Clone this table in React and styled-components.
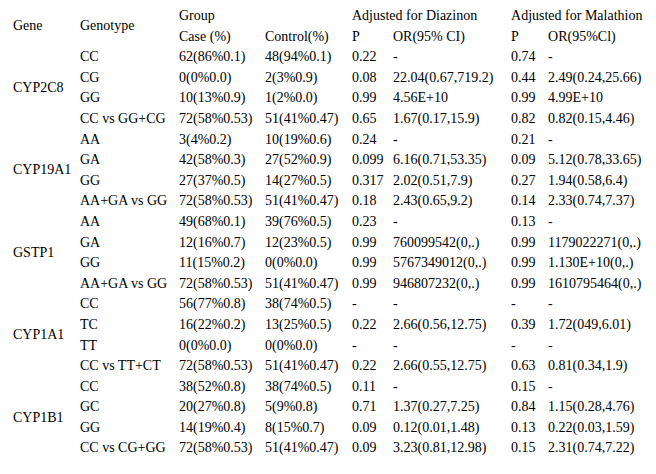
import React from "react";
import styled, { createGlobalStyle } from "styled-components";

const GlobalStyle = createGlobalStyle`
  html, body {
    margin: 0;
    padding: 0;
    background: #ffffff;
  }
  body {
    font-family: "Liberation Serif", "Times New Roman", serif;
    color: #000000;
  }
`;

const Page = styled.div`
  width: 656px;
  height: 474px;
  padding: 6px 0 0 13px;
  box-sizing: border-box;
  overflow: hidden;
`;

const Table = styled.table`
  border-collapse: collapse;
  table-layout: fixed;
  width: 643px;
  font-family: "Liberation Serif", "Times New Roman", serif;
  font-size: 14px;
  color: #000000;
`;

const Row = styled.tr`
  height: 20.6px;
`;

const Cell = styled.td`
  padding: 0;
  text-align: left;
  vertical-align: middle;
  white-space: nowrap;
  line-height: 20.6px;
  font-family: "Liberation Serif", "Times New Roman", serif;
  font-size: 14px;
`;

const widths = [67, 99, 86, 87, 41, 118, 37, 108];

const genes = [
  {
    name: "CYP2C8",
    rows: [
      ["CC", "62(86%0.1)", "48(94%0.1)", "0.22", "-", "0.74", "-"],
      ["CG", "0(0%0.0)", "2(3%0.9)", "0.08", "22.04(0.67,719.2)", "0.44", "2.49(0.24,25.66)"],
      ["GG", "10(13%0.9)", "1(2%0.0)", "0.99", "4.56E+10", "0.99", "4.99E+10"],
      ["CC vs GG+CG", "72(58%0.53)", "51(41%0.47)", "0.65", "1.67(0.17,15.9)", "0.82", "0.82(0.15,4.46)"],
    ],
  },
  {
    name: "CYP19A1",
    rows: [
      ["AA", "3(4%0.2)", "10(19%0.6)", "0.24", "-", "0.21", "-"],
      ["GA", "42(58%0.3)", "27(52%0.9)", "0.099", "6.16(0.71,53.35)", "0.09", "5.12(0.78,33.65)"],
      ["GG", "27(37%0.5)", "14(27%0.5)", "0.317", "2.02(0.51,7.9)", "0.27", "1.94(0.58,6.4)"],
      ["AA+GA vs GG", "72(58%0.53)", "51(41%0.47)", "0.18", "2.43(0.65,9.2)", "0.14", "2.33(0.74,7.37)"],
    ],
  },
  {
    name: "GSTP1",
    rows: [
      ["AA", "49(68%0.1)", "39(76%0.5)", "0.23", "-", "0.13", "-"],
      ["GA", "12(16%0.7)", "12(23%0.5)", "0.99", "760099542(0,.)", "0.99", "1179022271(0,.)"],
      ["GG", "11(15%0.2)", "0(0%0.0)", "0.99", "5767349012(0,.)", "0.99", "1.130E+10(0,.)"],
      ["AA+GA vs GG", "72(58%0.53)", "51(41%0.47)", "0.99", "946807232(0,.)", "0.99", "1610795464(0,.)"],
    ],
  },
  {
    name: "CYP1A1",
    rows: [
      ["CC", "56(77%0.8)", "38(74%0.5)", "-", "-", "-", "-"],
      ["TC", "16(22%0.2)", "13(25%0.5)", "0.22", "2.66(0.56,12.75)", "0.39", "1.72(049,6.01)"],
      ["TT", "0(0%0.0)", "0(0%0.0)", "-", "-", "-", "-"],
      ["CC vs TT+CT", "72(58%0.53)", "51(41%0.47)", "0.22", "2.66(0.55,12.75)", "0.63", "0.81(0.34,1.9)"],
    ],
  },
  {
    name: "CYP1B1",
    rows: [
      ["CC", "38(52%0.8)", "38(74%0.5)", "0.11", "-", "0.15", "-"],
      ["GC", "20(27%0.8)", "5(9%0.8)", "0.71", "1.37(0.27,7.25)", "0.84", "1.15(0.28,4.76)"],
      ["GG", "14(19%0.4)", "8(15%0.7)", "0.09", "0.12(0.01,1.48)", "0.13", "0.22(0.03,1.59)"],
      ["CC vs CG+GG", "72(58%0.53)", "51(41%0.47)", "0.09", "3.23(0.81,12.98)", "0.15", "2.31(0.74,7.22)"],
    ],
  },
];

export default function App() {
  return (
    <>
      <GlobalStyle />
      <Page>
        <Table>
          <colgroup>
            {widths.map((w, i) => (
              <col key={i} style={{ width: w }} />
            ))}
          </colgroup>
          <tbody>
            <Row>
              <Cell rowSpan={2}>Gene</Cell>
              <Cell rowSpan={2}>Genotype</Cell>
              <Cell colSpan={2}>Group</Cell>
              <Cell colSpan={2}>Adjusted for Diazinon</Cell>
              <Cell colSpan={2}>Adjusted for Malathion</Cell>
            </Row>
            <Row>
              <Cell>Case (%)</Cell>
              <Cell>Control(%)</Cell>
              <Cell>P</Cell>
              <Cell>OR(95% CI)</Cell>
              <Cell>P</Cell>
              <Cell>OR(95%Cl)</Cell>
            </Row>
            {genes.map((g) =>
              g.rows.map((r, i) => (
                <Row key={g.name + i}>
                  {i === 0 && <Cell rowSpan={g.rows.length}>{g.name}</Cell>}
                  {r.map((v, j) => (
                    <Cell key={j}>{v}</Cell>
                  ))}
                </Row>
              ))
            )}
          </tbody>
        </Table>
      </Page>
    </>
  );
}
